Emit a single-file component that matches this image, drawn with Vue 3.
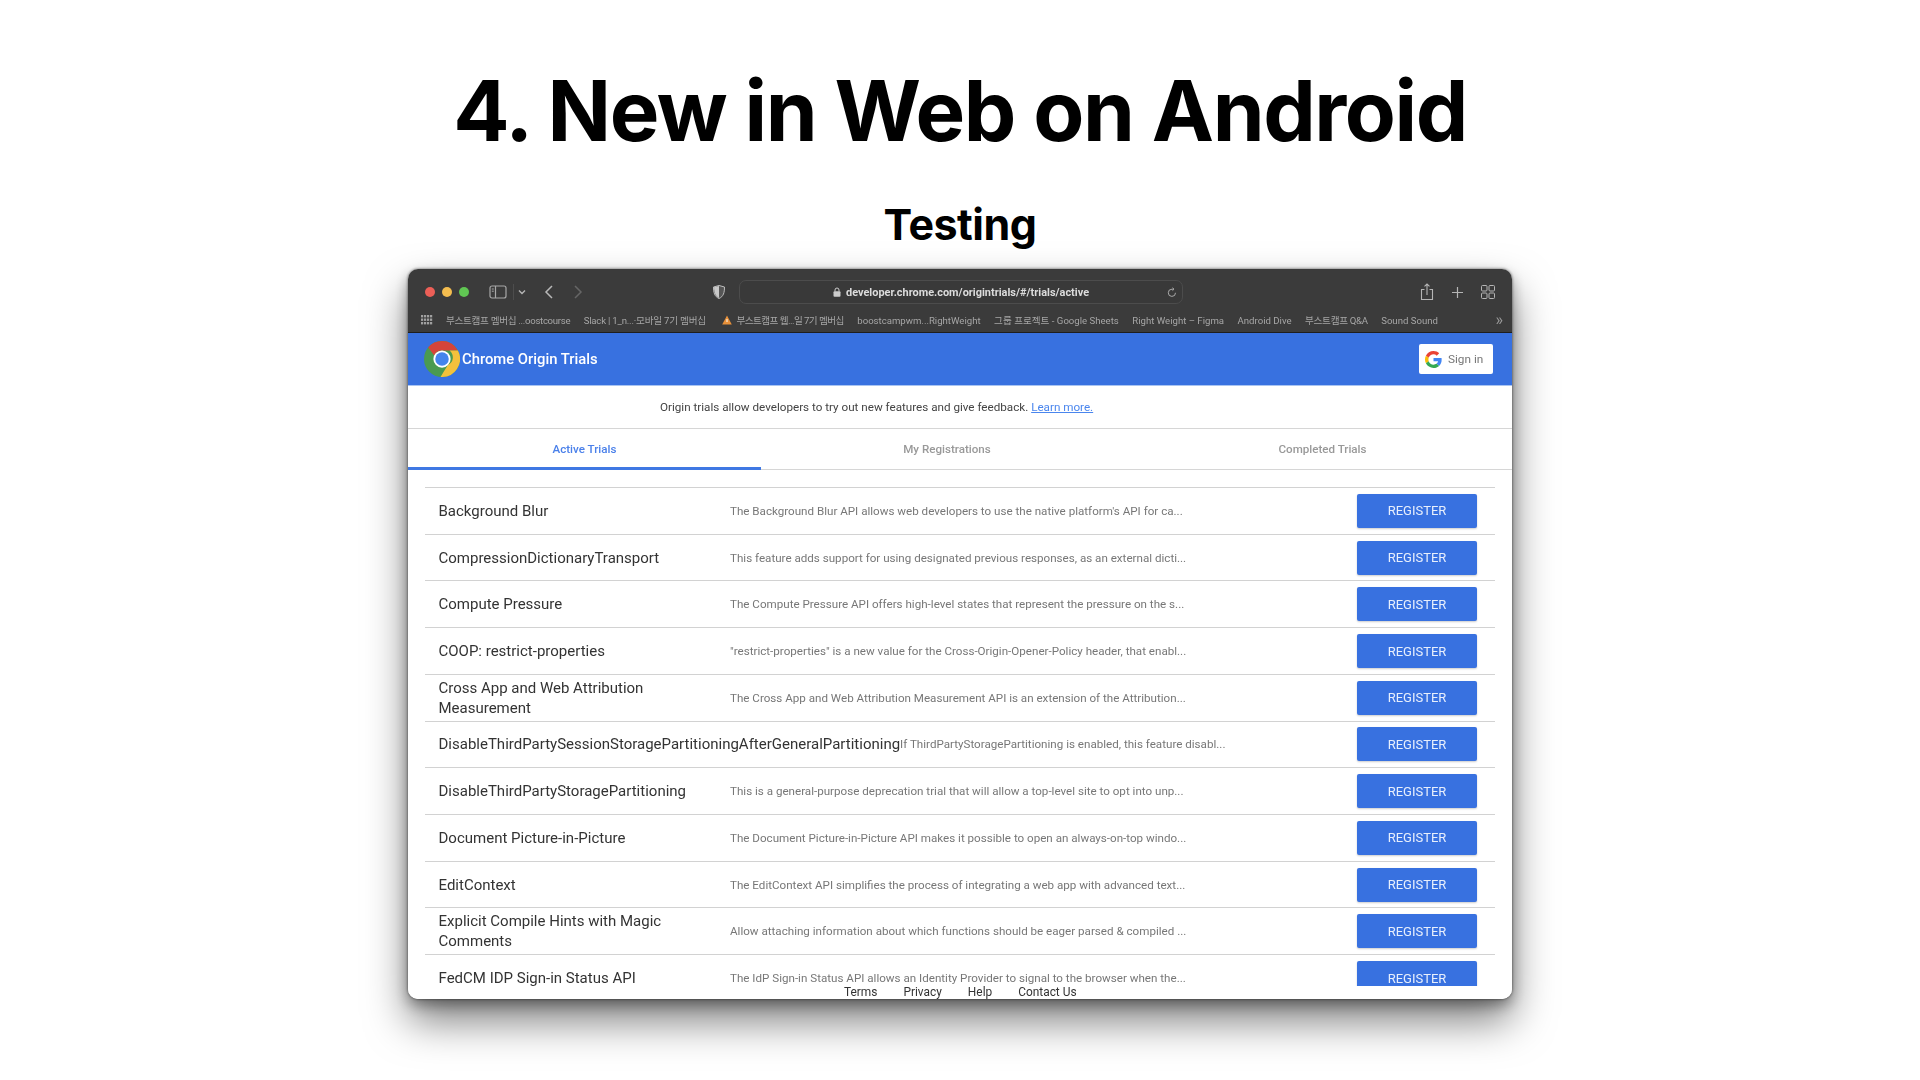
<script setup>
const bookmarks = [
  { t: '부스트캠프 멤버십 ...oostcourse', cls: 'tight' },
  { t: 'Slack | 1_n...·모바일 7기 멤버십', cls: 'snug' },
  { t: '부스트캠프 웹...일 7기 멤버십', warn: true, cls: 'tighter' },
  { t: 'boostcampwm...RightWeight', cls: '' },
  { t: '그룹 프로젝트 - Google Sheets', cls: '' },
  { t: 'Right Weight – Figma', cls: '' },
  { t: 'Android Dive', cls: '' },
  { t: '부스트캠프 Q&A', cls: 'tight' },
  { t: 'Sound Sound', cls: '' }
]
const trials = [
  ['Background Blur', "The Background Blur API allows web developers to use the native platform's API for ca..."],
  ['CompressionDictionaryTransport', 'This feature adds support for using designated previous responses, as an external dicti...'],
  ['Compute Pressure', 'The Compute Pressure API offers high-level states that represent the pressure on the s...'],
  ['COOP: restrict-properties', '"restrict-properties" is a new value for the Cross-Origin-Opener-Policy header, that enabl...'],
  ['Cross App and Web Attribution Measurement', 'The Cross App and Web Attribution Measurement API is an extension of the Attribution...'],
  ['DisableThirdPartySessionStoragePartitioningAfterGeneralPartitioning', 'If ThirdPartyStoragePartitioning is enabled, this feature disabl...'],
  ['DisableThirdPartyStoragePartitioning', 'This is a general-purpose deprecation trial that will allow a top-level site to opt into unp...'],
  ['Document Picture-in-Picture', 'The Document Picture-in-Picture API makes it possible to open an always-on-top windo...'],
  ['EditContext', 'The EditContext API simplifies the process of integrating a web app with advanced text...'],
  ['Explicit Compile Hints with Magic Comments', 'Allow attaching information about which functions should be eager parsed & compiled ...'],
  ['FedCM IDP Sign-in Status API', 'The IdP Sign-in Status API allows an Identity Provider to signal to the browser when the...']
]
const footer = ['Terms', 'Privacy', 'Help', 'Contact Us']
</script>

<template>
  <div class="page">
    <h1 class="title">4. New in Web on Android</h1>
    <h2 class="subtitle">Testing</h2>
    <div class="window">
      <div class="toolbar">
        <div class="lights">
          <span class="light red"></span><span class="light yellow"></span><span class="light green"></span>
        </div>
        <svg class="sidebar-ic" width="18" height="14" viewBox="0 0 18 14" fill="none" stroke="#a8a8a8" stroke-width="1.2">
          <rect x="1" y="1" width="16" height="12" rx="2"/><path d="M6.5 1v12"/><path d="M2.8 4h2M2.8 6.2h2" stroke-width="1"/>
        </svg>
        <span class="divider"></span>
        <svg class="chev" width="8" height="6" viewBox="0 0 8 6" fill="none" stroke="#b5b5b5" stroke-width="1.4"><path d="M1 1.5l3 3 3-3"/></svg>
        <svg class="back" width="10" height="14" viewBox="0 0 10 14" fill="none" stroke="#b8b8b8" stroke-width="1.5"><path d="M8 1L2 7l6 6"/></svg>
        <svg class="forward" width="10" height="14" viewBox="0 0 10 14" fill="none" stroke="#666" stroke-width="1.5"><path d="M2 1l6 6-6 6"/></svg>
        <svg class="shield" width="12" height="14" viewBox="0 0 12 14"><path d="M6 .5L11.500 2c0 5.500-1 9.500-5.500 11.500C1.500 11.500.5 7.500.5 2z" fill="#555" stroke="#bdbdbd"/><path d="M6 1v12C2.500 11.200 1.200 7.500 1 2.300z" fill="#c8c8c8"/></svg>
        <div class="urlbar">
          <svg class="lock" width="8" height="10" viewBox="0 0 8 10"><path d="M2 4.500V3a2 2 0 014 0v1.500" fill="none" stroke="#ccc" stroke-width="1"/><rect x=".5" y="4.300" width="7" height="5.400" rx="1" fill="#ccc"/></svg>
          <span class="url">developer.chrome.com/origintrials/#/trials/active</span>
          <svg class="reload" width="10" height="11" viewBox="0 0 10 11" fill="none" stroke="#aaa" stroke-width="1"><path d="M8.500 5.800A3.600 3.600 0 115 2.200h1.500"/><path d="M5.500.8L7 2.200 5.500 3.600"/></svg>
        </div>
        <svg class="share" width="14" height="18" viewBox="0 0 14 18" fill="none" stroke="#b5b5b5" stroke-width="1.1"><path d="M4.500 6.500H1.500v10h11v-10H9.500"/><path d="M7 12V1M4.500 3.300L7 1l2.500 2.300"/></svg>
        <svg class="plus" width="13" height="13" viewBox="0 0 13 13" stroke="#b5b5b5" stroke-width="1.2"><path d="M6.500 1v11M1 6.500h11"/></svg>
        <svg class="tabs-ic" width="14" height="14" viewBox="0 0 14 14" fill="none" stroke="#b5b5b5" stroke-width="1"><rect x=".5" y=".5" width="5.500" height="5.500" rx="1"/><rect x="8" y=".5" width="5.500" height="5.500" rx="1"/><rect x=".5" y="8" width="5.500" height="5.500" rx="1"/><rect x="8" y="8" width="5.500" height="5.500" rx="1"/></svg>
      </div>
      <div class="bookmarks">
        <svg class="apps" width="12" height="10" viewBox="0 0 12 10" fill="#a0a0a0">
          <template v-for="y in [0,3.500,7]" :key="y"><rect v-for="x in [0,3,6,9]" :key="x" :x="x" :y="y" width="2.200" height="2.400"/></template>
        </svg>
        <span v-for="b in bookmarks" :key="b.t" class="bm" :class="[b.cls, { warned: b.warn }]">
          <svg v-if="b.warn" class="warn" width="10" height="10" viewBox="0 0 10 10"><path d="M5 .5L9.800 9.500H.2z" fill="#e8913a"/><path d="M5 4v3" stroke="#fff" stroke-width="1"/></svg>{{ b.t }}
        </span>
        <span class="more">»</span>
      </div>
      <header class="app-header">
        <svg class="chrome" width="36" height="36" viewBox="0 0 48 48">
          <circle cx="24" cy="24" r="24" fill="#4a9a50"/>
          <path d="M24 0a24 24 0 0121.200 12.800L24 12.800a11.500 11.500 0 00-10.400 6.400L5.600 8.600A24 24 0 0124 0z" fill="#d5443a"/>
          <path d="M45.200 12.800A24 24 0 0122 47.900l9.600-15.500A11.500 11.500 0 0034 12.800z" fill="#f3c13c"/>
          <circle cx="24" cy="24" r="11.500" fill="#fff"/><circle cx="24" cy="24" r="9" fill="#4484ec"/>
        </svg>
        <span class="brand">Chrome Origin Trials</span>
        <button class="signin">
          <svg width="17" height="17" viewBox="0 0 48 48">
            <path fill="#EA4335" d="M24 9.500c3.500 0 6.700 1.200 9.200 3.600l6.900-6.900C35.900 2.400 30.500 0 24 0 14.600 0 6.500 5.400 2.600 13.200l8 6.200C12.500 13.700 17.800 9.500 24 9.500z"/>
            <path fill="#4285F4" d="M47 24.500c0-1.600-.1-3.100-.4-4.500H24v9h12.900c-.6 3-2.200 5.500-4.800 7.200l7.700 6c4.500-4.200 7.200-10.300 7.200-17.700z"/>
            <path fill="#FBBC05" d="M10.500 28.600c-.5-1.400-.8-3-.8-4.600s.3-3.200.8-4.600l-8-6.200C.9 16.500 0 20.100 0 24s.9 7.500 2.600 10.800z"/>
            <path fill="#34A853" d="M24 48c6.500 0 11.900-2.100 15.900-5.800l-7.700-6c-2.200 1.500-5 2.300-8.200 2.300-6.200 0-11.500-4.200-13.400-9.900l-8 6.200C6.500 42.600 14.600 48 24 48z"/>
          </svg>
          <span>Sign in</span>
        </button>
      </header>
      <div class="info">
        <span class="info-text">Origin trials allow developers to try out new features and give feedback. <a class="learn">Learn more.</a></span>
      </div>
      <nav class="tabs">
        <div class="tab active">Active Trials</div>
        <div class="tab">My Registrations</div>
        <div class="tab">Completed Trials</div>
      </nav>
      <div class="list">
        <div v-for="t in trials" :key="t[0]" class="row">
          <div class="name">{{ t[0] }}</div>
          <div class="desc">{{ t[1] }}</div>
          <button class="register">REGISTER</button>
        </div>
      </div>
      <footer class="foot">
        <span v-for="f in footer" :key="f">{{ f }}</span>
      </footer>
    </div>
  </div>
</template>

<style scoped>
.page {
  width: 1920px;
  height: 1080px;
  background: #fff;
  display: flex;
  flex-direction: column;
  align-items: center;
  overflow: hidden;
  font-family: Roboto, "Noto Sans CJK KR", sans-serif;
}
.title {
  margin: 61px 0 0;
  font: 700 83.4px/100px Inter, sans-serif;
  letter-spacing: -1.42px;
  color: #000;
}
.subtitle {
  margin: 36px 0 0;
  font: 700 43px/54px Inter, sans-serif;
  letter-spacing: -.5px;
  color: #000;
}
.window {
  margin-top: 18px;
  width: 1104px;
  height: 730px;
  flex: none;
  border-radius: 10px;
  overflow: hidden;
  background: #fff;
  display: flex;
  flex-direction: column;
  box-shadow: 0 22px 42px rgba(0,0,0,.5), 0 6px 14px rgba(0,0,0,.35), 0 0 3px rgba(0,0,0,.6);
  filter: blur(.55px);
}
.toolbar {
  height: 40px;
  box-sizing: border-box;
  padding-top: 6px;
  background: #3b3b3b;
  display: flex;
  align-items: center;
  flex: none;
  position: relative;
}
.lights { display: flex; gap: 7px; margin-left: 17px; }
.light { width: 10px; height: 10px; border-radius: 50%; }
.red { background: #ec5f57; }
.yellow { background: #f4bd4f; }
.green { background: #60c653; }
.sidebar-ic { margin-left: 20px; }
.divider { width: 1px; height: 16px; background: #4d4d4d; margin-left: 6px; }
.chev { margin-left: 4px; }
.back { margin-left: 18px; }
.forward { margin-left: 18.5px; }
.shield { margin-left: 130.5px; }
.urlbar {
  margin-left: 14px;
  width: 444px;
  height: 24px;
  box-sizing: border-box;
  border: 1px solid #4c4c4c;
  border-radius: 7px;
  background: #393939;
  display: flex;
  align-items: center;
  position: relative;
  padding-left: 93px;
}
.lock { margin-right: 5px; }
.url { font-size: 10.95px; font-weight: 700; color: #dcdcdc; white-space: nowrap; }
.reload { position: absolute; right: 5px; top: 6px; }
.share { margin-left: 237px; }
.plus { margin-left: 17px; }
.tabs-ic { margin-left: 17px; }
.bookmarks {
  height: 24px;
  background: #3b3b3b;
  border-bottom: 1px solid #1e1e1e;
  box-sizing: border-box;
  display: flex;
  align-items: center;
  flex: none;
  padding: 0 0 1px 13px;
  color: #a6a6a6;
  font-size: 9.6px;
  white-space: nowrap;
}
.apps { margin-right: 13px; }
.bm { margin-right: 13.5px; }
.tight { letter-spacing: -.3px; }
.snug { letter-spacing: -.2px; }
.tighter { letter-spacing: -.55px; }
.warned { margin-left: 3px; }
.warn { margin-right: 4px; vertical-align: -1px; }
.more { position: absolute; right: 9px; font-size: 16px; line-height: 16px; color: #999; }
.app-header {
  height: 53px;
  flex: none;
  background: #3871e0;
  border-bottom: 1px solid #a9c4f2;
  box-sizing: border-box;
  display: flex;
  align-items: center;
  padding: 0 19px 0 16px;
}
.brand { margin-left: 2px; color: #fff; font-size: 14.8px; font-weight: 500; }
.signin {
  margin-left: auto;
  width: 74px;
  height: 30px;
  border: 0;
  border-radius: 2px;
  background: #fff;
  display: flex;
  align-items: center;
  gap: 6px;
  padding: 0 0 0 6px;
  color: #777;
  font: 400 11.8px Roboto, sans-serif;
}
.info {
  height: 43px;
  flex: none;
  box-sizing: border-box;
  border-bottom: 1px solid #d6d6d6;
  display: flex;
  align-items: center;
  padding-left: 252px;
  font-size: 11.66px;
  color: #444;
}
.learn { color: #4a86ee; text-decoration: underline; }
.tabs {
  height: 41px;
  flex: none;
  box-sizing: border-box;
  border-bottom: 1px solid #d6d6d6;
  display: grid;
  grid-template-columns: 353px 372px 1fr;
  font-size: 11.6px;
  font-weight: 500;
  color: #999;
}
.tab { display: flex; align-items: center; justify-content: center; height: 41px; box-sizing: border-box; padding-top: 1px; border-bottom: 3px solid transparent; }
.tab.active { color: #4a80ea; border-bottom-color: #3f78e3; }
.list {
  flex: 1;
  min-height: 0;
  overflow: hidden;
  padding: 17px 17px 0;
}
.row {
  height: 46.72px;
  box-sizing: border-box;
  border-top: 1px solid #d2d2d2;
  display: flex;
  align-items: center;
  padding: 0 18px 0 13.5px;
}
.name {
  flex: none;
  width: 291.5px;
  min-width: min-content;
  font-size: 15px;
  line-height: 20px;
  color: #333;
}
.desc { font-size: 11.62px; color: #777; white-space: nowrap; }
.register {
  margin-left: auto;
  flex: none;
  width: 120px;
  height: 34px;
  border: 0;
  border-radius: 2px;
  background: #3871e0;
  color: #e8effc;
  font: 400 13px Roboto, sans-serif;
  box-shadow: 0 1px 2px rgba(0,0,0,.2);
}
.foot {
  height: 13px;
  flex: none;
  background: #fff;
  display: flex;
  padding-left: 436px;
  gap: 26px;
  font-size: 11.9px;
  line-height: 13px;
  color: #333;
}
</style>
